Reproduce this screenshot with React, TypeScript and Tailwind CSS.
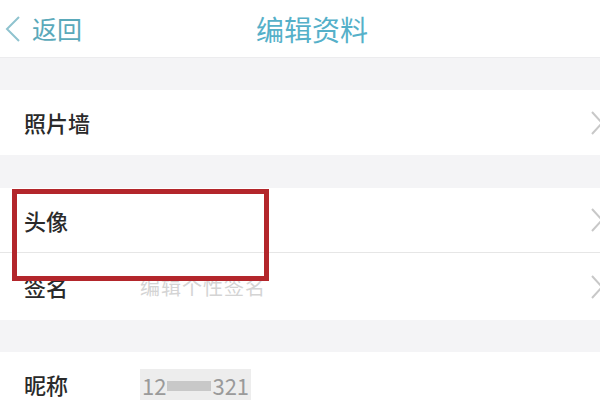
import React from "react";

const font = { fontFamily: '"Noto Sans CJK SC", "Noto Sans", sans-serif' };

function Chevron() {
  return (
    <svg width="14" height="26" viewBox="0 0 14 26" className="shrink-0">
      <path d="M2 2 L12 13 L2 24" fill="none" stroke="#c8c8c8" strokeWidth="2" />
    </svg>
  );
}

function Row({ label, children, chevron = true, border = false }: { label: string; children?: React.ReactNode; chevron?: boolean; border?: boolean }) {
  return (
    <div className={`flex items-center bg-white pl-6 ${border ? "border-b border-[#e6e6e6]" : ""}`}>
      <span className="w-[116px] text-[22px] font-medium text-[#2a2a2a]">{label}</span>
      <div className="flex-1">{children}</div>
      {chevron && <div className="mr-[-4px]"><Chevron /></div>}
    </div>
  );
}

export default function App() {
  return (
    <div className="relative w-[600px] h-[400px] overflow-hidden bg-[#f4f4f6]" style={font}>
      <div className="flex h-[57px] items-center bg-white relative">
        <div className="flex items-center pl-[5px]">
          <svg width="16" height="28" viewBox="0 0 16 28">
            <path d="M14 2 L2 14 L14 26" fill="none" stroke="#8fc3cf" strokeWidth="2" />
          </svg>
          <span className="ml-[11px] text-[25px] text-[#5aa9ba]">返回</span>
        </div>
        <div className="absolute left-0 right-0 top-0 h-[57px] flex items-center justify-center pointer-events-none">
          <span className="text-[28px] text-[#55b0c9] ml-[24px]">编辑资料</span>
        </div>
      </div>
      <div className="h-[33px] border-t border-[#ececee]" />
      <div className="h-[65px] grid">
        <Row label="照片墙" />
      </div>
      <div className="h-[33px]" />
      <div className="h-[65px] grid">
        <Row label="头像" border />
      </div>
      <div className="h-[67px] grid">
        <Row label="签名">
          <span className="text-[20px] text-[#d4d4d4] tracking-[1px]">编辑个性签名</span>
        </Row>
      </div>
      <div className="h-[32px]" />
      <div className="h-[65px] grid">
        <Row label="昵称" chevron={false}>
          <span className="inline-flex items-center bg-[#ededed] px-[2px] text-[22px] text-[#9a9a9a] mt-[2px]">
            12
            <span className="inline-block w-[44px] h-[10px] bg-[#c8c8c8] mx-[1px]" />
            321
          </span>
        </Row>
      </div>
      <div className="absolute left-[12px] top-[189px] w-[257px] h-[92px] border-[5px] border-[#b3262b]" />
    </div>
  );
}
